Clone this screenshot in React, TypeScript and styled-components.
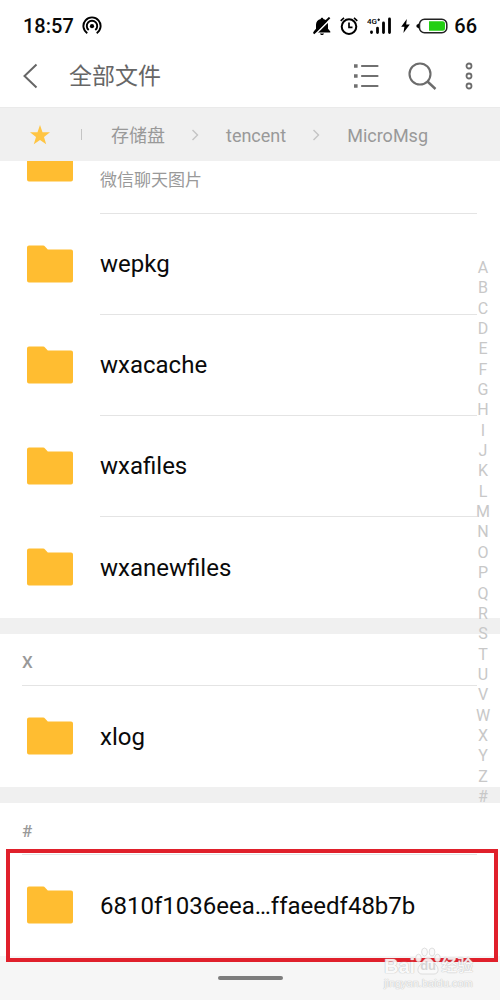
import React from "react";
import styled, { createGlobalStyle } from "styled-components";

const GlobalStyle = createGlobalStyle`
  * { box-sizing: border-box; }
  body {
    margin: 0;
    background: #f6f6f6;
    font-family: Roboto, "Noto Sans CJK SC", sans-serif;
    color: #0a0a0a;
  }
  a { color: inherit; text-decoration: none; }
  button { border: 0; padding: 0; background: none; font: inherit; color: inherit; cursor: pointer; }
  ul, ol { list-style: none; margin: 0; padding: 0; }
  svg { display: block; flex: none; }
`;

const Page = styled.div`
  position: relative;
  min-height: 100vh;
  display: flex;
  flex-direction: column;
`;

const StatusBar = styled.div`
  height: 52px;
  padding: 0 23px;
  display: flex;
  align-items: center;
  justify-content: space-between;
  background: #fff;
  font-size: 20px;
  font-weight: 500;
  line-height: 24px;
`;

const StatusGroup = styled.div<{ $gap: number }>`
  display: flex;
  align-items: center;
  gap: ${(p) => p.$gap}px;
`;

const Header = styled.header`
  height: 55px;
  padding: 0 27px 8px 22px;
  display: flex;
  align-items: center;
  background: #fff;
  color: #666;
`;

const Title = styled.h1`
  flex: 1;
  margin: 0 0 0 29px;
  padding-top: 2px;
  font-size: 23px;
  font-weight: 400;
  line-height: 32px;
`;

const Tools = styled.div`
  display: flex;
  align-items: center;
  gap: 28px;
`;

const Breadcrumb = styled.nav`
  height: 54px;
  padding: 0 30px;
  display: flex;
  align-items: center;
  background: #f0f0f0;
  border-top: 1px solid #eaeaea;
  color: #999;
  font-size: 18px;
  line-height: 24px;
`;

const Crumbs = styled.ol`
  padding-top: 2px;
  display: flex;
  align-items: center;
`;

const Crumb = styled.li`
  display: flex;
  align-items: center;
  & + & svg { margin: 0 27px 2px 26px; }
`;

const Pipe = styled.span`
  width: 1px;
  height: 11px;
  margin: 0 29px 0 31px;
  background: #c4c4c4;
`;

/* Clips rows scrolled under the breadcrumb while the highlight may spill below. */
const Viewport = styled.main`
  display: flow-root;
  clip-path: inset(0 0 -10px 0);
  background: #fff;
`;

const Scrolled = styled.div`
  margin-top: -48px;
`;

const Section = styled.section`
  & + & { border-top: 16px solid #f0f0f0; }
`;

const SectionTitle = styled.h2`
  height: 52px;
  margin: 0 23px 0 22px;
  border-bottom: 1px solid #e4e4e4;
  color: #999;
  font-size: 17px;
  font-weight: 500;
  line-height: 56px;
`;

const Item = styled.li`
  position: relative;
`;

const Row = styled.a`
  height: 101px;
  padding: 0 23px 0 27px;
  display: flex;
  align-items: center;
  gap: 27px;
  svg { margin-bottom: 2px; }
`;

const RowText = styled.span`
  flex: 1;
  align-self: stretch;
  display: flex;
  align-items: center;
  font-size: 24px;
  line-height: 32px;
  ${Item}:not(:last-child) & { border-bottom: 1px solid #e4e4e4; }
`;

const Note = styled.small`
  padding-top: 34px;
  color: #999;
  font-size: 17px;
  line-height: 24px;
`;

const Highlight = styled.div`
  position: absolute;
  inset: -6px 2px -6px 6px;
  border: 4px solid #e0202b;
  pointer-events: none;
`;

const IndexBar = styled.nav`
  position: absolute;
  top: 258px;
  right: 6px;
  width: 22px;
  height: 549px;
  display: flex;
  flex-direction: column;
  justify-content: space-between;
  color: #c8c8c8;
  font-size: 16px;
  line-height: 20px;
  text-align: center;
`;

const GestureBar = styled.footer`
  flex: 1;
  min-height: 44px;
  padding-top: 20px;
  display: flex;
  justify-content: center;
  background: #f6f6f6;
`;

const GesturePill = styled.button`
  width: 65px;
  height: 4px;
  border-radius: 2px;
  background: #7d7d7d;
`;

const Watermark = styled.div`
  position: absolute;
  right: 27px;
  bottom: 10px;
  width: 89px;
  color: #fafafa;
  opacity: 0.9;
  text-shadow: 0 0 1px #bbb, 0 0 1px #bbb;
  white-space: nowrap;
  pointer-events: none;
`;

const WatermarkBrand = styled.div`
  display: flex;
  align-items: flex-end;
  font-family: "Liberation Sans", "Noto Sans CJK SC", sans-serif;
  font-size: 20px;
  font-weight: 700;
  line-height: 20px;
`;

const WatermarkPaw = styled.span`
  position: relative;
  flex: none;
  width: 26px;
  text-align: center;
  font-size: 13px;
  color: #d2d2d2;
  text-shadow: none;
  svg { position: absolute; left: 0; bottom: 1px; z-index: -1; }
`;

const WatermarkCjk = styled.span`
  font-size: 16px;
  font-weight: 500;
`;

const WatermarkUrl = styled.div`
  font-family: "Liberation Sans", sans-serif;
  font-size: 11px;
  line-height: 14px;
`;

const Folder = () => (
  <svg width="46" height="38" viewBox="0 0 46 38" aria-hidden="true">
    <path
      fill="#ffbd31"
      d="M2 .5h14.2c.8 0 1.300.3 1.800.9l2.300 2.600c.3.4.7.5 1.200.5H44a2 2 0 0 1 2 2V35.500a2 2 0 0 1-2 2H2a2 2 0 0 1-2-2V2.500a2 2 0 0 1 2-2z"
    />
  </svg>
);

const Hotspot = () => (
  <svg width="20" height="20" viewBox="0 0 20 20" fill="none" stroke="#000" strokeWidth="1.9" aria-hidden="true">
    <path d="M5.300 17.200A8.600 8.600 0 1 1 14.700 17.200" />
    <path d="M6.700 14A5.200 5.200 0 1 1 13.300 14" />
    <circle cx="10" cy="10.200" r="2.100" fill="#000" stroke="none" />
  </svg>
);

const Muted = () => (
  <svg width="18" height="18" viewBox="0 0 18 18" aria-hidden="true">
    <path d="M9 .8c.9 0 1.300.6 1.300 1.300 2.900.7 4.700 2.900 4.700 5.600v4l2.300 2.700v1.200H.7v-1.200L3 11.700v-4c0-2.700 1.800-4.900 4.700-5.600C7.700 1.400 8.100.8 9 .8zM7 16.400h4c0 .9-.9 1.500-2 1.500s-2-.6-2-1.500z" />
    <path d="M1.600 18 18 1.600" stroke="#fff" strokeWidth="1.600" />
    <path d="M.6 16.600 16.600.6" stroke="#000" strokeWidth="2" />
  </svg>
);

const Alarm = () => (
  <svg width="18" height="18" viewBox="0 0 18 18" fill="none" stroke="#000" aria-hidden="true">
    <circle cx="9" cy="9.600" r="7.300" strokeWidth="2" />
    <path d="M9 5.500v4.800h3.500" strokeWidth="1.700" />
    <path d="M.7 3.800 4 .9M17.300 3.800 14 .9" strokeWidth="1.600" />
  </svg>
);

const Signal = () => (
  <svg width="25" height="18" viewBox="0 0 25 18" aria-hidden="true">
    <text x="0" y="7" fontSize="8" fontWeight="500" fontFamily="Roboto, sans-serif">4G</text>
    <path d="M10.400 2.800h2.600M11.700 1.500v2.600" stroke="#000" />
    <g stroke="#000" strokeWidth="2.800" strokeLinecap="round">
      <path d="M4.500 14.800v.8M10.500 11.200v4.400M16.500 6v9.600M22.500 2v13.600" />
    </g>
  </svg>
);

const Bolt = () => (
  <svg width="9" height="14" viewBox="0 0 9 14" aria-hidden="true">
    <path d="M5.800 0 .2 7.800h3.200L2.400 14 8.800 5.500H5.200z" />
  </svg>
);

const Battery = () => (
  <svg width="32" height="16" viewBox="0 0 32 16" aria-hidden="true">
    <path d="M3.200 5.300v5.400L.5 9V7z" />
    <rect x="3.500" y="1.200" width="27.300" height="13.600" rx="5" fill="#fff" stroke="#222" strokeWidth="1.500" />
    <path d="M13 3.200h13.500a2.500 2.500 0 0 1 2.500 2.500v4.600a2.500 2.500 0 0 1-2.500 2.500H13z" fill="#23cf13" />
  </svg>
);

const Back = () => (
  <svg width="18" height="26" viewBox="0 0 18 26" fill="none" stroke="#666" strokeWidth="2" aria-hidden="true">
    <path d="M14.500 1.500 2.500 13l12 11.500" />
  </svg>
);

const ListView = () => (
  <svg width="26" height="26" viewBox="0 0 26 26" stroke="#707070" aria-hidden="true">
    <path d="M1 3h3.600M1 13h3.600M1 23h3.600" strokeWidth="3.600" />
    <path d="M9 3h15.500M9 13h15.500M9 23h15.500" strokeWidth="2.200" strokeLinecap="round" />
  </svg>
);

const Search = () => (
  <svg width="30" height="30" viewBox="0 0 30 30" fill="none" stroke="#6c6c6c" strokeWidth="2.100" aria-hidden="true">
    <circle cx="13" cy="13" r="10.500" />
    <path d="m20.500 20.500 8 7.500" strokeWidth="2.400" />
  </svg>
);

const More = () => (
  <svg width="8" height="28" viewBox="0 0 8 28" fill="none" stroke="#6c6c6c" strokeWidth="1.800" aria-hidden="true">
    <circle cx="4" cy="4" r="2.500" />
    <circle cx="4" cy="14" r="2.500" />
    <circle cx="4" cy="24" r="2.500" />
  </svg>
);

const Star = () => (
  <svg width="20" height="20" viewBox="0 0 20 20" aria-hidden="true">
    <path fill="#ffc543" d="m10 0 2.500 7.200 7.500.1-6 4.600 2.200 7.400L10 15l-6.200 4.300L6 11.900 0 7.300l7.500-.1z" />
  </svg>
);

const Chevron = () => (
  <svg width="8" height="12" viewBox="0 0 8 12" fill="none" stroke="#c4c4c4" strokeWidth="1.400" aria-hidden="true">
    <path d="m1.500 1 5 5-5 5" />
  </svg>
);

const Paw = () => (
  <svg width="26" height="28" viewBox="0 0 26 28" fill="#fafafa" stroke="#cfcfcf" strokeWidth=".7" aria-hidden="true">
    <ellipse cx="3.500" cy="11" rx="2.800" ry="3.800" />
    <ellipse cx="9.500" cy="5" rx="2.900" ry="4" />
    <ellipse cx="17" cy="5" rx="2.900" ry="4" />
    <ellipse cx="22.500" cy="11" rx="2.800" ry="3.800" />
    <path d="M13 11c4 0 5 4 8 7s3 9-2 9H7c-5 0-5-6-2-9s4-7 8-7z" />
  </svg>
);

const crumbs = ["存储盘", "tencent", "MicroMsg"];

type Group = { title?: string; items: { name?: string; note?: string; marked?: boolean }[] };

const groups: Group[] = [
  {
    items: [
      { note: "微信聊天图片" },
      { name: "wepkg" },
      { name: "wxacache" },
      { name: "wxafiles" },
      { name: "wxanewfiles" },
    ],
  },
  { title: "X", items: [{ name: "xlog" }] },
  { title: "#", items: [{ name: "6810f1036eea…ffaeedf48b7b", marked: true }] },
];

export default function App() {
  return (
    <Page>
      <GlobalStyle />
      <StatusBar>
        <StatusGroup $gap={8}>
          <span>18:57</span>
          <Hotspot />
        </StatusGroup>
        <StatusGroup $gap={9}>
          <Muted />
          <Alarm />
          <Signal />
          <StatusGroup $gap={6}>
            <Bolt />
            <Battery />
            <span>66</span>
          </StatusGroup>
        </StatusGroup>
      </StatusBar>
      <Header>
        <button aria-label="返回"><Back /></button>
        <Title>全部文件</Title>
        <Tools>
          <button aria-label="列表"><ListView /></button>
          <button aria-label="搜索"><Search /></button>
          <button aria-label="更多"><More /></button>
        </Tools>
      </Header>
      <Breadcrumb>
        <button aria-label="收藏"><Star /></button>
        <Pipe />
        <Crumbs>
          {crumbs.map((crumb, i) => (
            <Crumb key={crumb}>
              {i > 0 && <Chevron />}
              <a href="#path">{crumb}</a>
            </Crumb>
          ))}
        </Crumbs>
      </Breadcrumb>
      <Viewport>
        <Scrolled>
          {groups.map((group, i) => (
            <Section key={i}>
              {group.title && <SectionTitle>{group.title}</SectionTitle>}
              <ul>
                {group.items.map((item, j) => (
                  <Item key={j}>
                    <Row href="#folder">
                      <Folder />
                      <RowText>
                        {item.name}
                        {item.note && <Note>{item.note}</Note>}
                      </RowText>
                    </Row>
                    {item.marked && <Highlight />}
                  </Item>
                ))}
              </ul>
            </Section>
          ))}
        </Scrolled>
      </Viewport>
      <GestureBar>
        <GesturePill aria-label="主屏幕" />
      </GestureBar>
      <IndexBar aria-label="索引">
        {"ABCDEFGHIJKLMNOPQRSTUVWXYZ#".split("").map((letter) => (
          <a key={letter} href="#index">{letter}</a>
        ))}
      </IndexBar>
      <Watermark>
        <WatermarkBrand>
          <span>Bai</span>
          <WatermarkPaw><Paw />du</WatermarkPaw>
          <WatermarkCjk>经验</WatermarkCjk>
        </WatermarkBrand>
        <WatermarkUrl>jingyan.baidu.com</WatermarkUrl>
      </Watermark>
    </Page>
  );
}
